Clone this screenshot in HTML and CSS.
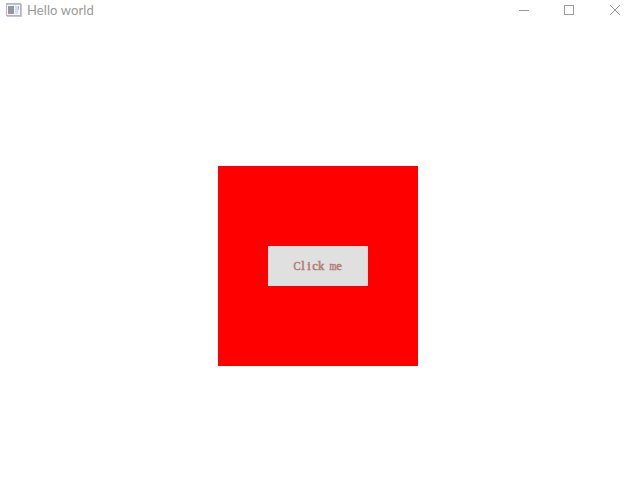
FILE: index.html
```html
<!DOCTYPE html>
<html lang="en">
<head>
<meta charset="utf-8">
<title>Hello world</title>
<link rel="stylesheet" href="styles.css">
</head>
<body>
<div class="window">
<header class="titlebar">
<svg class="app-icon" width="16" height="14" viewBox="0 0 16 14" shape-rendering="crispEdges"><rect x=".5" y=".5" width="14" height="12" fill="#f8f8fc" stroke="#b4b4c6"/><path fill="#c5c5d6" d="M1 1h13v1H1zM15 1h1v13H1v-1h14z"/><path fill="#8d98a5" d="M2 3h6v8H2z"/><path fill="#b08e88" d="M2 8h3v3H2zM5 6h2v2H5z"/><path fill="#d2dcec" d="M9 3h3v8H9z"/><path fill="#b6bfd0" d="M12 3h1v4h-1z"/></svg>
<span class="title">Hello world</span>
<div class="controls">
<svg width="10" height="10"><path d="M0 5.5h10"/></svg>
<svg width="10" height="10" shape-rendering="crispEdges"><path d="M.5.5h9v9h-9z"/></svg>
<svg width="10" height="10"><path d="M0 0l10 10M10 0L0 10"/></svg>
</div>
</header>
<main class="content"><div class="square"><button class="button" aria-label="Click me"><span class="label"><i>C</i><i>l</i><i>i</i><i>c</i><i>k</i><i> </i><i class="wide">m</i><i>e</i></span></button></div></main>
</div>
</body>
</html>
```
FILE: styles.css
```css
body { margin: 0; background: #fff; }
.window { height: 502px; display: flex; flex-direction: column; overflow: hidden; }
.titlebar { height: 20px; display: flex; align-items: center; padding: 0 16px 0 6px; }
.title { margin-left: 5px; color: #999; font: 13px/20px Lato, sans-serif; letter-spacing: .1px; }
.controls { margin-left: auto; display: flex; gap: 35px; }
.controls svg { fill: none; stroke: #999; }
.controls svg:last-child { margin-left: 1px; }
.content { flex: 1; display: flex; justify-content: center; padding-top: 146px; }
.square { width: 200px; height: 200px; background: #f00; display: grid; place-content: center; }
.button { width: 100px; height: 40px; border: 0; padding: 0; background: #e0e0e0; color: #b08078; font: 12.5px/14px "Liberation Serif", serif; -webkit-text-stroke: .6px #b08078; }
.label { display: grid; grid-template-columns: repeat(8, 6px); justify-content: center; }
.label i { display: flex; justify-content: center; font-style: normal; }
.label i:first-child { transform: scaleX(.85); }
.label .wide { transform: scaleX(.7); }
```
